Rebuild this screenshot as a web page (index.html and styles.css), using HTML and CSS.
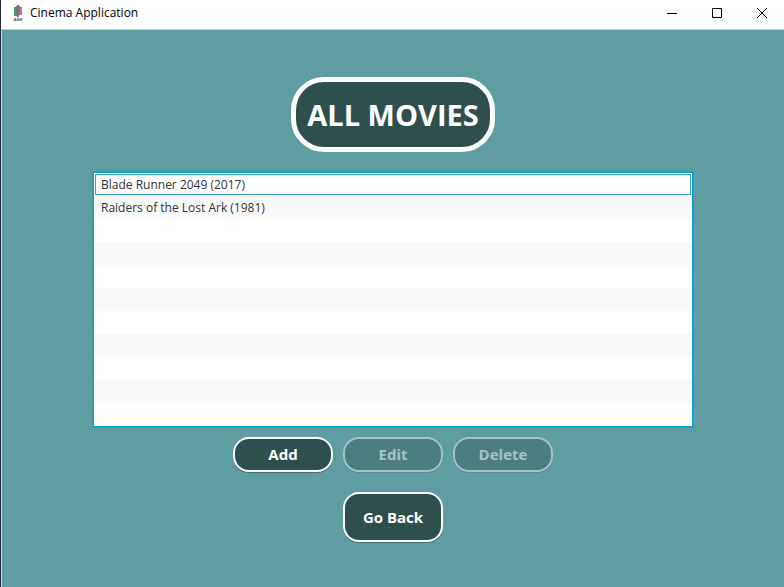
FILE: index.html
```
<!DOCTYPE html>
<html lang="en">
<head>
<meta charset="utf-8">
<title>Cinema Application</title>
<link rel="stylesheet" href="styles.css">
</head>
<body>
<div class="window">
  <header class="titlebar">
    <svg class="logo" width="12" height="18" viewBox="0 0 12 18" aria-hidden="true">
      <path fill="#489779" d="M2 3h2v9H2z"/>
      <path fill="#d4737c" d="M8 3h2v8H8z"/>
      <path fill="#77777a" d="M4 2h1v10H4zM5 1h2v12H5zM7 2h1v9H7z"/>
      <text class="logo-text" x="6" y="17" text-anchor="middle">AGH</text>
    </svg>
    <span class="caption">Cinema Application</span>
    <div class="window-controls">
      <button type="button" aria-label="Minimize"><svg width="12" height="12" viewBox="0 0 12 12"><path d="M1 6.500h10"/></svg></button>
      <button type="button" aria-label="Maximize"><svg width="12" height="12" viewBox="0 0 12 12"><path d="M1.500 1.500h9v9h-9z"/></svg></button>
      <button type="button" aria-label="Close"><svg width="12" height="12" viewBox="0 0 12 12"><path d="M1 1l10 10M11 1L1 11"/></svg></button>
    </div>
  </header>
  <main class="content">
    <h1 class="heading">ALL MOVIES</h1>
    <ul class="movies" role="listbox" aria-label="Movies" tabindex="0">
      <li class="focused" role="option">Blade Runner 2049 (2017)</li>
      <li role="option">Raiders of the Lost Ark (1981)</li>
      <li></li><li></li><li></li><li></li><li></li><li></li><li></li><li></li><li></li>
    </ul>
    <div class="actions">
      <button class="button" type="button">Add</button>
      <button class="button" type="button" disabled>Edit</button>
      <button class="button" type="button" disabled>Delete</button>
    </div>
    <button class="button back" type="button">Go Back</button>
  </main>
</div>
</body>
</html>
```
FILE: styles.css
```
* {
  box-sizing: border-box;
}

body {
  margin: 0;
  font-family: "Open Sans", "Noto Sans", sans-serif;
  font-size: 12px;
  background: #5f9ea0;
}

.window {
  display: flex;
  flex-direction: column;
  min-height: 100vh;
  border-left: 1px solid #252c3a;
}

.titlebar {
  display: flex;
  align-items: center;
  height: 29px;
  padding: 0 0 3px 11px;
  background: #fff;
  color: #000;
}

.logo {
  overflow: visible;
}

.logo-text {
  font-size: 4px;
  font-weight: bold;
  fill: #444;
}

.caption {
  flex: 1;
  margin-left: 6px;
  line-height: 16px;
}

.window-controls {
  display: flex;
  height: 100%;
}

.window-controls button {
  display: flex;
  align-items: center;
  justify-content: center;
  width: 45px;
  padding: 0;
  border: 0;
  background: none;
}

.window-controls svg {
  fill: none;
  stroke: #000;
}

.content {
  flex: 1;
  display: flex;
  flex-direction: column;
  align-items: center;
  padding: 47px 91px 20px;
  border-top: 1px solid #b7d3d4;
  border-left: 1px solid #b7d3d4;
  background: #5f9ea0;
}

.heading {
  margin: 0 0 20px;
  padding: 12px 11px;
  border: 5px solid #fff;
  border-radius: 33px;
  background: #2f4f4f;
  color: #fff;
  font-size: 29px;
  line-height: 41px;
}

.movies {
  width: 100%;
  margin: 0 0 10px;
  padding: 0;
  list-style: none;
  border: 1px solid #039ed3;
  outline: 1px solid rgba(3, 158, 211, 0.4);
  outline-offset: 0;
  background: #fff;
  color: #323232;
}

.movies li {
  height: 23px;
  padding: 0 7px;
  line-height: 23px;
}

.movies li:nth-child(even) {
  background: #f9f9f9;
}

.movies .focused {
  box-shadow: inset 0 0 0 1px #fff, inset 0 0 0 2px #36abd0;
}

.actions {
  display: flex;
  gap: 10px;
  margin-bottom: 20px;
}

.button {
  width: 100px;
  height: 35px;
  padding: 0 0 1px;
  border: 2px solid #fff;
  border-radius: 16px;
  background: #2f4f4f;
  box-shadow: 0 1px 0 rgba(0, 0, 0, 0.3);
  color: #fff;
  font: bold 15px/20px "Open Sans", "Noto Sans", sans-serif;
}

.button:disabled {
  opacity: 0.4;
}

.back {
  height: 50px;
}
```
